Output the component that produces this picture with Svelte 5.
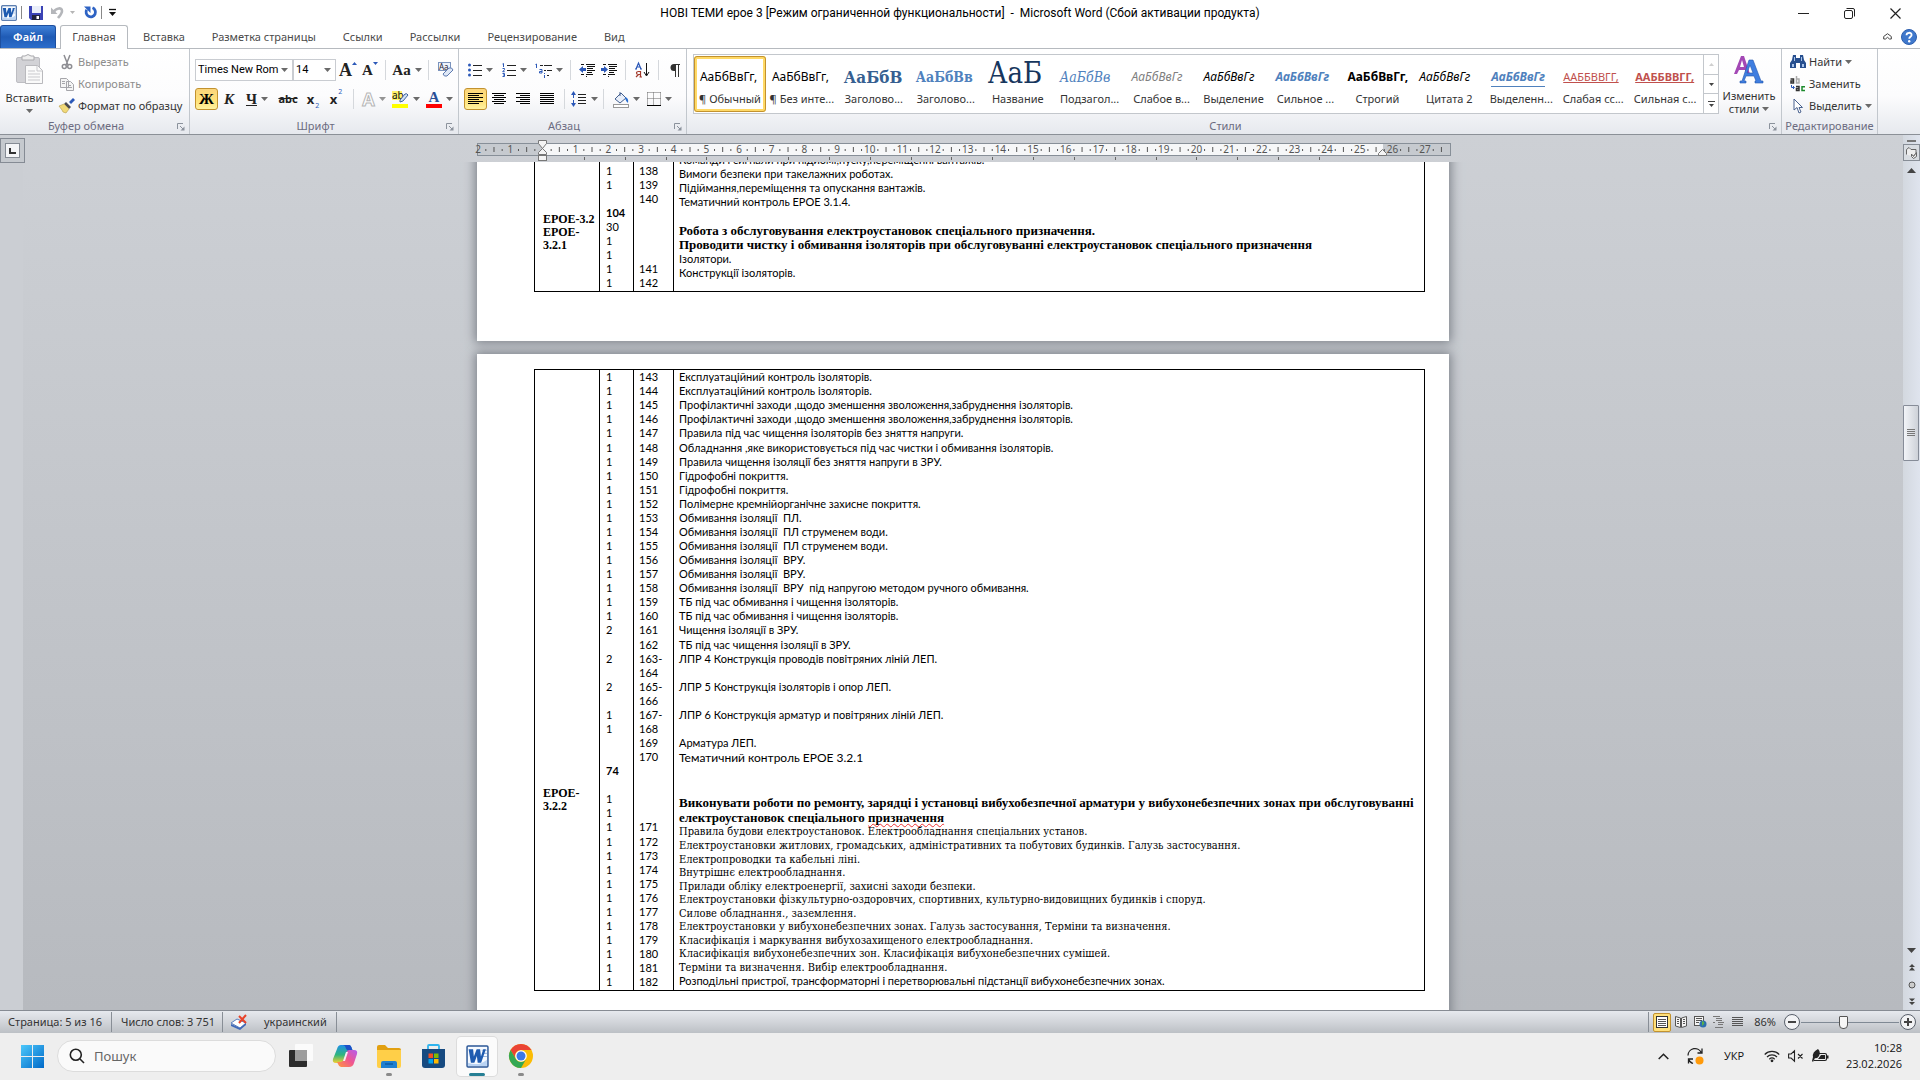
<script>
  const tabs = ['Вставка', 'Разметка страницы', 'Ссылки', 'Рассылки', 'Рецензирование', 'Вид'];

  const styles = [
    { name: '¶ Обычный', sample: 'АаБбВвГг,', cls: 'plain', active: true },
    { name: '¶ Без инте...', sample: 'АаБбВвГг,', cls: 'plain' },
    { name: 'Заголово...', sample: 'АаБбВ', cls: 'head1' },
    { name: 'Заголово...', sample: 'АаБбВв', cls: 'head2' },
    { name: 'Название', sample: 'АаБ', cls: 'title' },
    { name: 'Подзагол...', sample: 'АаБбВв', cls: 'subtitle' },
    { name: 'Слабое в...', sample: 'АаБбВвГг', cls: 'soft' },
    { name: 'Выделение', sample: 'АаБбВвГг', cls: 'emph' },
    { name: 'Сильное ...', sample: 'АаБбВвГг', cls: 'strongemph' },
    { name: 'Строгий', sample: 'АаБбВвГг,', cls: 'strict' },
    { name: 'Цитата 2', sample: 'АаБбВвГг', cls: 'emph' },
    { name: 'Выделенн...', sample: 'АаБбВвГг', cls: 'quote' },
    { name: 'Слабая сс...', sample: 'ААББВВГГ,', cls: 'softref' },
    { name: 'Сильная с...', sample: 'ААББВВГГ,', cls: 'strongref' }
  ];

  const blank = (n, cls = '') => Array.from({ length: n }, () => ['', cls]);
  const ones = (n) => Array.from({ length: n }, () => ['1']);
  const range = (a, b) => Array.from({ length: b - a + 1 }, (_, i) => [String(a + i)]);

  const page1 = [
    [...blank(4, 'tall'), ['ЕРОЕ-3.2', 'code'], ['ЕРОЕ-', 'code'], ['3.2.1', 'code']],
    [...blank(1), ...ones(2), ...blank(1), ['104', 'bold'], ['30'], ...ones(4)],
    [...blank(1), ...range(138, 140), ...blank(4), ...range(141, 142)],
    [
      ['Команди і сигнали при підйомі,пуску,переміщенні вантажів.'],
      ['Вимоги безпеки при такелажних роботах.'],
      ['Підіймання,переміщення та опускання вантажів.'],
      ['Тематичний контроль ЕРОЕ 3.1.4.'],
      ['', 'tall'],
      ['Робота з обслуговування електроустановок спеціального призначення.', 'heading'],
      ['Проводити чистку і обмивання ізоляторів при обслуговуванні електроустановок спеціального призначення', 'heading'],
      ['Ізолятори.'],
      ['Конструкції ізоляторів.']
    ]
  ];

  const page2 = [
    [...blank(27), ...blank(3, 'code'), ['ЕРОЕ-', 'code'], ['3.2.2', 'code']],
    [
      ...ones(5), ['1', 'tall'], ...ones(12), ['2'], ['', 'tall'], ['2'], [''], ['2'], [''],
      ['1'], ['1'], [''], [''], ['74', 'bold'], [''], ['1'], ['1'], ['1'], ['1', 'tall'], ...ones(10)
    ],
    [
      ...range(143, 147), ['148', 'tall'], ...range(149, 161), ['162', 'tall'],
      ['163-'], ['164'], ['165-'], ['166'], ['167-'], ['168'], ['169'], ['170'],
      ...blank(4), ['171'], ['172', 'tall'], ...range(173, 182)
    ],
    [
      ['Експлуатаційний контроль ізоляторів.'],
      ['Експлуатаційний контроль ізоляторів.'],
      ['Профілактичні заходи ,щодо зменшення зволоження,забруднення ізоляторів.'],
      ['Профілактичні заходи ,щодо зменшення зволоження,забруднення ізоляторів.'],
      ['Правила під час чищення ізоляторів без зняття напруги.'],
      ['Обладнання ,яке використовується під час чистки і обмивання ізоляторів.', 'tall'],
      ['Правила чищення ізоляції без зняття напруги в ЗРУ.'],
      ['Гідрофобні покриття.'],
      ['Гідрофобні покриття.'],
      ['Полімерне кремнійорганічне захисне покриття.'],
      ['Обмивання ізоляції  ПЛ.'],
      ['Обмивання ізоляції  ПЛ струменем води.'],
      ['Обмивання ізоляції  ПЛ струменем води.'],
      ['Обмивання ізоляції  ВРУ.'],
      ['Обмивання ізоляції  ВРУ.'],
      ['Обмивання ізоляції  ВРУ  під напругою методом ручного обмивання.'],
      ['ТБ під час обмивання і чищення ізоляторів.'],
      ['ТБ під час обмивання і чищення ізоляторів.'],
      ['Чищення ізоляції в ЗРУ.'],
      ['ТБ під час чищення ізоляції в ЗРУ.', 'tall'],
      ['ЛПР 4 Конструкція проводів повітряних ліній ЛЕП.'],
      [''],
      ['ЛПР 5 Конструкція ізоляторів і опор ЛЕП.'],
      [''],
      ['ЛПР 6 Конструкція арматур и повітряних ліній ЛЕП.'],
      [''],
      ['Арматура ЛЕП.'],
      ['Тематичний контроль ЕРОЕ 3.2.1', 'tall large'],
      ['', 'tall'],
      ['', 'tall'],
      ['Виконувати роботи по ремонту, зарядці і установці вибухобезпечної арматури у вибухонебезпечних зонах при обслуговуванні', 'heading tall'],
      ['електроустановок спеціального ', 'heading tall', 'призначення'],
      ['Правила будови електроустановок. Електрообладнання спеціальних установ.', 'serif'],
      ['Електроустановки житлових, громадських, адміністративних та побутових будинків. Галузь застосування.', 'serif'],
      ['Електропроводки та кабельні ліні.', 'serif short'],
      ['Внутрішнє електрообладнання.', 'serif'],
      ['Прилади обліку електроенергії, захисні заходи безпеки.', 'serif short'],
      ['Електроустановки фізкультурно-оздоровчих, спортивних, культурно-видовищних будинків і споруд.', 'serif'],
      ['Силове обладнання., заземлення.', 'serif short'],
      ['Електроустановки у вибухонебезпечних зонах. Галузь застосування, Терміни та визначення.', 'serif'],
      ['Класифікація і маркування вибухозахищеного електрообладнання.', 'serif short'],
      ['Класифікація вибухонебезпечних зон. Класифікація вибухонебезпечних сумішей.', 'serif'],
      ['Терміни та визначення. Вибір електрообладнання.', 'serif short'],
      ['Розподільні пристрої, трансформаторні і перетворювальні підстанції вибухонебезпечних зонах.', 'short']
    ]
  ];

  const unit = 32.67;
  const zero = 66;
  const marks = [];
  for (let q = -7; q <= 110; q++) {
    const n = q / 4;
    const x = zero + n * unit;
    if (q === 0) continue;
    if (q % 4 === 0) marks.push({ x, kind: 'num', label: String(Math.abs(n)) });
    else marks.push({ x, kind: q % 2 === 0 ? 'tick' : 'dot' });
  }
  const stops = Array.from({ length: 19 }, (_, i) => Math.round(zero + (i + 1) * unit * 1.25));

  let zoomLevel = $state(43);
</script>

{#snippet arrow()}
  <svg class="arrow" width="7" height="4" viewBox="0 0 7 4" aria-hidden="true"><path d="M0 0h7L3.5 4z" fill="#6a6a6a" /></svg>
{/snippet}

{#snippet launcher()}
  <button class="launcher" aria-label="Параметры">
    <svg width="8" height="8" viewBox="0 0 8 8"><path d="M.5 6V.5H6M3 3l3 3" fill="none" stroke="#8b929c" /><path d="M7.500 3.500v4h-4z" fill="#8b929c" /></svg>
  </button>
{/snippet}

{#snippet bars(lines)}
  <svg width="16" height="14" viewBox="0 0 16 14">
    {#each lines as l, i}
      <path d="M{l[0]} {i * 2 + 1.5}h{l[1]}" stroke="#000" />
    {/each}
  </svg>
{/snippet}

{#snippet sheet(cols)}
  <table>
    <tbody>
      <tr>
        {#each cols as lines, i}
          <td class="c{i}">
            {#each lines as [text, cls, flagged]}
              <div class="line {cls ?? ''}">{text}{#if flagged}<span class="typo">{flagged}</span>{/if}</div>
            {/each}
          </td>
        {/each}
      </tr>
    </tbody>
  </table>
{/snippet}

{#snippet wordLogo()}
  <svg viewBox="0 0 22 22" width="100%" height="100%">
    <rect x="1" y="1" width="20" height="20" rx="1" fill="#f6faff" stroke="#2b5797" stroke-width="1.400" />
    <path d="M15 5h5M16 8h4M15 11h5" stroke="#9db9e0" />
    <path d="M2 17c6 2 12 2 18-3v6H2z" fill="#b9d3f3" />
    <path d="M2.500 4h4.300l.7 7 2.700-7h3.300l.8 7 2.200-7H19l-4.500 13h-3.300l-.8-6.500L8 17H4.700z" fill="#1e5bb0" />
  </svg>
{/snippet}

<div class="app">
  <header class="titlebar">
    <div class="quick">
      <span class="applogo">{@render wordLogo()}</span>
      <i class="vline"></i>
      <button aria-label="Сохранить">
        <svg width="14" height="14" viewBox="0 0 14 14"><path d="M0 0h14v14H2l-2-2z" fill="#3a43b5" /><path d="M3 0h9v7H3z" fill="#e9eef9" /><path d="M3 9h8v5H3z" fill="#20233c" /><path d="M7.500 10H10v3H7.500z" fill="#fff" /></svg>
      </button>
      <button class="undo" aria-label="Отменить">
        <svg width="13" height="13" viewBox="0 0 13 13"><path d="M3 5.500c2-3.500 8-4.500 8-.5 0 2.500-1.500 4-4 7" fill="none" stroke="#b4b6ba" stroke-width="2.600" /><path d="M0 1.500V8h6.500z" fill="#b4b6ba" /></svg>
        <svg width="5" height="3" viewBox="0 0 5 3"><path d="M0 0h5L2.500 3z" fill="#b5b5b5" /></svg>
      </button>
      <button aria-label="Повторить">
        <svg width="13" height="13" viewBox="0 0 13 13"><path d="M8.500 1.800a4.700 4.700 0 1 1-5.800 2" fill="none" stroke="#2e63c4" stroke-width="2.800" /><path d="M0 .5h6.500V7z" fill="#2e63c4" /></svg>
      </button>
      <i class="vline"></i>
      <button aria-label="Настройка панели">
        <svg width="7" height="7" viewBox="0 0 7 7"><path d="M0 .5h7" stroke="#111" stroke-width="1.300" /><path d="M0 3h7L3.500 7z" fill="#111" /></svg>
      </button>
    </div>
    <h1>НОВІ ТЕМИ ерое 3 [Режим ограниченной функциональности]&nbsp; -&nbsp; Microsoft Word (Сбой активации продукта)</h1>
    <div class="winbtns">
      <button aria-label="Свернуть"><svg width="11" height="11" viewBox="0 0 11 11"><path d="M0 5.500h11" stroke="#222" /></svg></button>
      <button aria-label="Восстановить"><svg width="11" height="11" viewBox="0 0 11 11" fill="none" stroke="#222"><rect x=".5" y="2.500" width="8" height="8" rx="1.500" /><path d="M2.500 .5H9q1.500 0 1.500 1.500v6.500" /></svg></button>
      <button aria-label="Закрыть"><svg width="11" height="11" viewBox="0 0 11 11"><path d="M.5.500l10 10m0-10l-10 10" stroke="#222" stroke-width="1.200" /></svg></button>
    </div>
  </header>

  <nav class="tabs">
    <button class="file">Файл</button>
    <button class="tab current">Главная</button>
    {#each tabs as t}<button class="tab">{t}</button>{/each}
    <span class="grow"></span>
    <button class="mini" aria-label="Свернуть ленту"><svg width="9" height="7" viewBox="0 0 9 7"><path d="M.7 3.500L4.500.700l3.800 2.800v2.500H6.500L4.500 4.300 2.500 6H.7z" fill="#fff" stroke="#444" /></svg></button>
    <button class="mini" aria-label="Справка">
      <svg width="16" height="16" viewBox="0 0 16 16"><circle cx="8" cy="8" r="7.500" fill="#3f78cc" stroke="#2d5fae" /><path d="M5.500 6.200C5.500 3 10.600 3 10.600 6c0 1.700-2.400 1.900-2.400 3.800" fill="none" stroke="#fff" stroke-width="1.800" /><circle cx="8.200" cy="12.200" r="1.200" fill="#fff" /></svg>
    </button>
  </nav>

  <div class="ribbon">
    <section class="group clipboard">
      <div class="body">
        <button class="paste">
          <svg width="28" height="31" viewBox="0 0 28 31"><rect x=".5" y="3.500" width="23" height="25" rx="1.500" fill="#d2d2d6" stroke="#bdbdc2" /><path d="M6 2h3q3-3 6 0h3v4H6z" fill="#efefef" stroke="#a9a9ad" /><path d="M9.500 11.500h12l5 5v13h-17z" fill="#fafafa" stroke="#b9b9bd" /><path d="M21 12v5h5M12 17h7M12 20h12M12 23h12M12 26h12" fill="none" stroke="#c9c9cd" /></svg>
          <span>Вставить</span>
          {@render arrow()}
        </button>
        <div class="stack">
          <button class="off">
            <svg width="16" height="16" viewBox="0 0 16 16" fill="none" stroke="#8d8d92" stroke-width="1.500"><path d="M5 1l4 10M11 1L7 11" /><circle cx="5.300" cy="12.500" r="2" /><circle cx="10.700" cy="12.500" r="2" /></svg>Вырезать
          </button>
          <button class="off">
            <svg width="16" height="16" viewBox="0 0 16 16" fill="#f4f4f4" stroke="#a5a5aa"><path d="M1.500 2.500h6l2 2v7h-8zM7.500 5.500h4l3 3v6h-7z" /><path d="M3 5.500h3M3 7.500h3M9 9.500h3M9 11.500h4" /></svg>Копировать
          </button>
          <button>
            <svg width="16" height="16" viewBox="0 0 16 16"><path d="M10 4l4-4 2 2-4 4z" fill="#2b58b8" /><path d="M7 4l5 5-2 2-5-5z" fill="#4b4b50" /><path d="M0 8l5-2 5 5-3 4-3-1-1-2z" fill="#f1d978" stroke="#b59a45" stroke-width=".6" /></svg>Формат по образцу
          </button>
        </div>
      </div>
      <footer>Буфер обмена{@render launcher()}</footer>
    </section>

    <section class="group font">
      <div class="rows">
        <div class="row">
          <span class="combo face"><select aria-label="Шрифт"><option>Times New Rom</option></select>{@render arrow()}</span>
          <span class="combo size"><select aria-label="Размер шрифта"><option>14</option></select>{@render arrow()}</span>
          <button class="t w24" aria-label="Увеличить размер"><b class="serif18">A</b><svg class="top" width="5" height="3" viewBox="0 0 5 3"><path d="M0 3h5L2.500 0z" fill="#2b58b8" /></svg></button>
          <button class="t w20" aria-label="Уменьшить размер"><b class="serif14">A</b><svg class="top" width="5" height="3" viewBox="0 0 5 3"><path d="M0 0h5L2.500 3z" fill="#2b58b8" /></svg></button>
          <i class="sep"></i>
          <button class="t w32" aria-label="Регистр"><b class="serif14">Aa</b>{@render arrow()}</button>
          <i class="sep"></i>
          <button class="t w24" aria-label="Очистить формат">
            <svg width="16" height="16" viewBox="0 0 16 16"><rect x=".5" y=".5" width="12" height="8" fill="#eef3fb" stroke="#7b93bd" /><text x="1" y="7.500" font-size="8" font-family="Noto Sans" fill="#223">Aa</text><path d="M5 12l6-6q3-1 4 2l-6 6q-3 1-4-2z" fill="#dfe8f6" stroke="#5f7bb0" /></svg>
          </button>
        </div>
        <div class="row">
          <button class="t on"><b class="serif14">Ж</b></button>
          <button class="t w22"><b class="serif14"><em>К</em></b></button>
          <button class="t w34"><b class="serif14"><u>Ч</u></b>{@render arrow()}</button>
          <button class="t w28"><s>abc</s></button>
          <button class="t w22"><b class="sans13">x</b><sub>2</sub></button>
          <button class="t w24"><b class="sans13">x</b><sup>2</sup></button>
          <i class="sep"></i>
          <button class="t w30 dim"><b class="outline">A</b>{@render arrow()}</button>
          <button class="t w34" aria-label="Цвет выделения">
            <svg width="17" height="17" viewBox="0 0 17 17"><rect y="0" width="10" height="9" fill="#fff36b" /><text x="0" y="8" font-size="10" font-family="Noto Sans" fill="#111">ab</text><path d="M8 9l5-6q2-1 3 1l-5 6-3 1z" fill="#cfe0f5" stroke="#41639c" /><rect y="13" width="16" height="4" fill="#ff0" /></svg>{@render arrow()}
          </button>
          <button class="t w32" aria-label="Цвет текста">
            <svg width="16" height="17" viewBox="0 0 16 17"><text x="8" y="11" text-anchor="middle" font-size="15" font-weight="bold" font-family="Liberation Serif" fill="#2a4f96">A</text><rect y="13" width="16" height="4" fill="#f00" /></svg>{@render arrow()}
          </button>
        </div>
      </div>
      <footer>Шрифт{@render launcher()}</footer>
    </section>

    <section class="group para">
      <div class="rows">
        <div class="row">
          <button class="t w34" aria-label="Маркеры">
            <svg width="14" height="14" viewBox="0 0 14 14"><path d="M5 2.500h9M5 7.500h9M5 12.500h9" stroke="#222" /><g fill="#2b58b8"><circle cx="1.500" cy="2" r="1.500" /><circle cx="1.500" cy="7" r="1.500" /><circle cx="1.500" cy="12" r="1.500" /></g></svg>{@render arrow()}
          </button>
          <button class="t w34" aria-label="Нумерация">
            <svg width="14" height="14" viewBox="0 0 14 14"><path d="M5 2.500h9M5 7.500h9M5 12.500h9" stroke="#222" /><path d="M.500 1l1-.5V4M.500 5.500h2v1.200l-1.800 2h2M.500 10.500h2v3h-2M1 12h1.500" fill="none" stroke="#2b58b8" /></svg>{@render arrow()}
          </button>
          <button class="t w34" aria-label="Многоуровневый список">
            <svg width="17" height="15" viewBox="0 0 17 15"><path d="M5 2.500h3M9 2.500h8M9 7.500h2M12 7.500h5M12 12.500h2" stroke="#222" /><path d="M.500 1.500l1-.5V5M4.500 6.500h2.500v3.500H4.500V8.500H7M9.500 10v1M9.500 12v3" fill="none" stroke="#2b58b8" /></svg>{@render arrow()}
          </button>
          <i class="sep"></i>
          <button class="t w22" aria-label="Уменьшить отступ"><svg width="17" height="14" viewBox="0 0 17 14"><path d="M2 1.500h3M7 1.500h9M8 3.500h8M8 5.500h6M8 7.500h8M8 9.500h5M2 11.500h3M7 11.500h7M7 13.500h1" stroke="#111" /><path d="M0 6.500l4-3.500v2h3v3H4v2z" fill="#2b58b8" /></svg></button>
          <button class="t w22" aria-label="Увеличить отступ"><svg width="17" height="14" viewBox="0 0 17 14"><path d="M2 1.500h3M7 1.500h9M8 3.500h8M8 5.500h6M8 7.500h8M8 9.500h5M2 11.500h3M7 11.500h7M7 13.500h1" stroke="#111" /><path d="M7 6.500L3 3v2H0v3h3v2z" fill="#2b58b8" /></svg></button>
          <i class="sep"></i>
          <button class="t w22" aria-label="Сортировка"><svg width="14" height="16" viewBox="0 0 14 16"><path d="M1 7l2.500-6L6 7M2 5h3.200M0 7h2M5 7h2" fill="none" stroke="#2b58b8" stroke-width="1.200" /><path d="M5.500 15V9.500H3.500q-2 0-2 1.500t2 1.500h2M3.500 12.500L1 15M4.500 15H7" fill="none" stroke="#a33a2c" stroke-width="1.200" /><path d="M11.500 1v12M9 10l2.500 4 2.500-4" fill="none" stroke="#111" /></svg></button>
          <i class="sep"></i>
          <button class="t w22" aria-label="Непечатаемые знаки"><svg width="10" height="13" viewBox="0 0 10 13"><path d="M5.500 13V.5H10M8.500 1v12" fill="none" stroke="#333" /><path d="M6 0H4a3.500 3.500 0 0 0 0 7h2z" fill="#333" /></svg></button>
        </div>
        <div class="row">
          <button class="t on" aria-label="По левому краю">{@render bars([[0,15],[0,11],[0,15],[0,11],[0,15],[0,11]])}</button>
          <button class="t w24" aria-label="По центру">{@render bars([[1,14],[3,10],[1,14],[3,10],[1,14],[3,10]])}</button>
          <button class="t w24" aria-label="По правому краю">{@render bars([[1,14],[5,10],[1,14],[5,10],[1,14],[5,10]])}</button>
          <button class="t w24" aria-label="По ширине">{@render bars([[1,14],[1,14],[1,14],[1,14],[1,14],[1,14]])}</button>
          <i class="sep"></i>
          <button class="t w28" aria-label="Интервал"><svg width="16" height="16" viewBox="0 0 16 16"><path d="M7 3.500h8M7 6.500h8M7 9.500h8M7 12.500h8" stroke="#222" /><path d="M0 4l2.500-4L5 4zM0 12l2.500 4L5 12zM2 4h1v3H2zM2 9h1v3H2z" fill="#2b58b8" /></svg>{@render arrow()}</button>
          <i class="sep"></i>
          <button class="t w34" aria-label="Заливка"><svg width="16" height="17" viewBox="0 0 16 17"><path d="M2 8l6-6 5 5-6 5z" fill="#e9effa" stroke="#44608f" /><path d="M7 5V1" stroke="#44608f" /><path d="M12 6q4 1 3 6-2-1-3-5z" fill="#2b6fd0" /><rect x=".5" y="13.500" width="15" height="3" fill="#fff" stroke="#999" /></svg>{@render arrow()}</button>
          <button class="t w32" aria-label="Границы"><svg width="14" height="14" viewBox="0 0 14 14" fill="none" stroke="#666"><path d="M.5.500h13M.5 6.500h13M.5.500v13M6.500.500v13M13.500.500v13" stroke-dasharray="1 1" /><path d="M0 13.500h14" stroke="#000" /></svg>{@render arrow()}</button>
        </div>
      </div>
      <footer>Абзац{@render launcher()}</footer>
    </section>

    <section class="group styles">
      <div class="body">
        <div class="gallery">
          {#each styles as s}
            <button class="style" class:active={s.active}>
              <span class="sample {s.cls}"><span>{s.sample}</span></span>
              <span class="name">{s.name}</span>
            </button>
          {/each}
          <div class="gscroll">
            <button class="dim" aria-label="Вверх"><svg width="5" height="3" viewBox="0 0 5 3"><path d="M0 3h5L2.500 0z" fill="#bbb" /></svg></button>
            <button aria-label="Вниз"><svg width="5" height="3" viewBox="0 0 5 3"><path d="M0 0h5L2.500 3z" fill="#444" /></svg></button>
            <button aria-label="Дополнительно"><svg width="7" height="6" viewBox="0 0 7 6"><path d="M0 .5h7" stroke="#444" /><path d="M1 3h5L3.500 6z" fill="#444" /></svg></button>
          </div>
        </div>
        <button class="change">
          <svg width="30" height="28" viewBox="0 0 30 28"><path d="M0 18L7 0h3l6 18h-4l-1-4H5l-2 4zm6-7h4L8 4z" fill="#a348b5" /><path d="M6 27v-2h2L15 4h4l8 21h2v2h-8v-2h1l-2-5h-8l-2 5h2v2zm7-10h6l-3-8z" fill="#3f7ee0" stroke="#2458ae" stroke-width=".6" /></svg>
          <span>Изменить</span>
          <span>стили {@render arrow()}</span>
        </button>
      </div>
      <footer>Стили{@render launcher()}</footer>
    </section>

    <section class="group edit">
      <div class="stack">
        <button><svg width="16" height="14" viewBox="0 0 16 14"><path d="M3 0h3v3h4V0h3l1 5 2 3v5h-6V8H6v5H0V8l2-3z" fill="#274f8f" /><path d="M2 9h2v3H2zM12 9h2v3h-2zM4 2h1v4H4zM11 2h1v4h-1z" fill="#a9c3ea" /></svg>Найти {@render arrow()}</button>
        <button><svg width="16" height="16" viewBox="0 0 16 16"><g fill="none" stroke-width="1.500"><path d="M.5 3h3v4H1V5h2.500" stroke="#333" /><path d="M6.500 0v7H9V3H6.500" stroke="#aaa" /><path d="M6 10.500h3v4H6.500v-2H9" stroke="#333" /><path d="M15 10.700h-3v3.800h3" stroke="#1c8a2c" /></g><path d="M1.500 9v2.500H4M3 10l1.500 1.500L3 13" fill="none" stroke="#2b58b8" /></svg>Заменить</button>
        <button><svg width="16" height="16" viewBox="0 0 16 16"><path d="M4 1v11l3-2.500L9 15l2-1-2-4.500h3.500z" fill="#fff" stroke="#4a628f" /></svg>Выделить {@render arrow()}</button>
      </div>
      <footer>Редактирование</footer>
    </section>
  </div>

  <main class="workspace">
    <div class="left">
      <button class="tabstop" aria-label="Тип табуляции"><span><svg width="7" height="6" viewBox="0 0 7 6"><path d="M1 0v5h6" fill="none" stroke="#333" stroke-width="2" /></svg></span></button>
    </div>
    <div class="center">
      <div class="rulerbar">
        <svg class="ruler" width="974" height="27" viewBox="0 0 974 27">
          <rect x=".5" y="8.500" width="973" height="12" fill="#c6cacf" stroke="#878f98" />
          <rect x="66" y="9" width="840" height="11" fill="#f6f7f8" />
          {#each marks as m}
            {#if m.kind === 'num'}
              <text x={m.x} y="18" text-anchor="middle">{m.label}</text>
            {:else if m.kind === 'tick'}
              <path d="M{m.x} 12v5" stroke="#555" />
            {:else}
              <path d="M{m.x} 14v2" stroke="#555" />
            {/if}
          {/each}
          <text x="1" y="18" text-anchor="middle">2</text>
          {#each stops as s}<path d="M{s}.500 22v3" stroke="#666" />{/each}
          <path d="M61.500 5.500h8v3l-4 5 4 4v2h-8v-2l4-4-4-5z" fill="#f4f4f4" stroke="#777" />
          <rect x="61.500" y="20.500" width="8" height="5" fill="#f4f4f4" stroke="#777" />
          <path d="M901.500 20.500v-2l4-4 4 4v2z" fill="#f4f4f4" stroke="#777" />
        </svg>
      </div>
      <div class="view">
        <article class="page first">{@render sheet(page1)}</article>
        <article class="page">{@render sheet(page2)}</article>
      </div>
    </div>
    <div class="scroll">
      <i class="split"></i>
      <button class="rulerbtn" aria-label="Линейка"><svg width="12" height="12" viewBox="0 0 12 12" fill="#eee" stroke="#666"><path d="M.5 7.500v-5L3 .5l2 2h5v4l-3 3" /><path d="M5.500 7l2 2.500 3-4v4l-3 2-2-2z" /></svg></button>
      <button class="up" aria-label="Вверх"><svg width="9" height="5" viewBox="0 0 9 5"><path d="M0 5h9L4.500 0z" fill="#444" /></svg></button>
      <div class="track"><div class="thumb"><svg width="8" height="8" viewBox="0 0 8 8"><path d="M0 .5h8M0 2.500h8M0 4.500h8M0 6.500h8" stroke="#777" /></svg></div></div>
      <button class="up" aria-label="Вниз"><svg width="9" height="5" viewBox="0 0 9 5"><path d="M0 0h9L4.500 5z" fill="#444" /></svg></button>
      <button class="nav" aria-label="Предыдущая страница"><svg width="6" height="7" viewBox="0 0 6 7"><path d="M0 3h6L3 0zM0 6.500h6L3 3z" fill="#444" /></svg></button>
      <button class="nav" aria-label="Объект перехода"><svg width="8" height="8" viewBox="0 0 8 8"><circle cx="4" cy="4" r="3" fill="#ccc" stroke="#555" /></svg></button>
      <button class="nav" aria-label="Следующая страница"><svg width="6" height="7" viewBox="0 0 6 7"><path d="M0 .5h6L3 3.500zM0 4h6L3 7z" fill="#444" /></svg></button>
    </div>
  </main>

  <div class="status">
    <button class="seg s1">Страница: 5 из 16</button>
    <button class="seg s2">Число слов: 3 751</button>
    <button class="seg s3">
      <svg width="17" height="15" viewBox="0 0 17 15"><path d="M0 8l6-4 9 4-6 5z" fill="#fff" stroke="#5b7fc0" /><path d="M0 9l9 4 6-5v2l-6 5-9-4z" fill="#3f68b8" /><path d="M8 1l7 7M15 0L8 8" stroke="#e8432a" stroke-width="2" /></svg>
      украинский
    </button>
    <span class="grow"></span>
    <i class="vbar"></i>
    <div class="views">
      <button class="sel" aria-label="Разметка страницы"><svg width="12" height="12" viewBox="0 0 12 12"><rect x=".5" y=".5" width="11" height="11" fill="#fff" stroke="#333" /><path d="M2 3.500h8M2 5.500h8M2 7.500h8M2 9.500h8" stroke="#555" /></svg></button>
      <button aria-label="Режим чтения"><svg width="12" height="12" viewBox="0 0 12 12" fill="#f4f4f4" stroke="#555"><path d="M.5.500l5 1.500v9.500l-5-1.500zM11.500.500l-5 1.500v9.500l5-1.500z" /><path d="M2 3.500h2M2 5.500h2M2 7.500h2M8 3.500h2M8 5.500h2M8 7.500h2" /></svg></button>
      <button aria-label="Веб-документ"><svg width="13" height="12" viewBox="0 0 13 12"><rect x=".5" y=".5" width="9" height="9" fill="#f4f4f4" stroke="#555" /><path d="M2 2.500h6M2 4.500h6M2 6.500h3" stroke="#555" /><circle cx="9" cy="8" r="3.500" fill="#2d6fae" /><path d="M8 5q3 1 2 3l-2 2z" fill="#57b04a" /></svg></button>
      <button aria-label="Структура"><svg width="12" height="12" viewBox="0 0 12 12"><path d="M0 .5h7M3 2.500h6M3 4.500h6M0 6.500h2M5 6.500h6M5 8.500h5M2 11.500h8" stroke="#777" /></svg></button>
      <button aria-label="Черновик"><svg width="12" height="12" viewBox="0 0 12 12"><path d="M0 1.500h11M0 3.500h11M0 5.500h11M0 7.500h11M0 9.500h11" stroke="#555" /></svg></button>
    </div>
    <button class="pct">86%</button>
    <button class="round" aria-label="Уменьшить"><svg width="16" height="16" viewBox="0 0 16 16"><circle cx="8" cy="8" r="7.500" fill="#f2f3f5" stroke="#59606b" /><path d="M4 8h8" stroke="#444" stroke-width="2" /></svg></button>
    <input class="zoom" type="range" aria-label="Масштаб" min="0" max="100" bind:value={zoomLevel} />
    <button class="round" aria-label="Увеличить"><svg width="16" height="16" viewBox="0 0 16 16"><circle cx="8" cy="8" r="7.500" fill="#f2f3f5" stroke="#59606b" /><path d="M4 8h8M8 4v8" stroke="#444" stroke-width="2" /></svg></button>
  </div>

  <div class="taskbar">
    <button class="start" aria-label="Пуск"><svg width="23" height="23" viewBox="0 0 23 23"><defs><linearGradient id="win" x1="0" y1="0" x2="1" y2="1"><stop offset="0" stop-color="#4cc8fb" /><stop offset="1" stop-color="#0069c8" /></linearGradient></defs><path d="M0 0h11v11H0zM12 0h11v11H12zM0 12h11v11H0zM12 12h11v11H12z" fill="url(#win)" /></svg></button>
    <label class="search">
      <svg width="16" height="16" viewBox="0 0 16 16" fill="none" stroke="#222" stroke-width="1.600"><circle cx="6.800" cy="6.800" r="5.500" /><path d="M11 11l4 4" /></svg>
      <input type="text" placeholder="Пошук" aria-label="Пошук" />
    </label>
    <div class="apps">
      <button aria-label="Представление задач"><svg width="24" height="24" viewBox="0 0 24 24"><rect x="6" y="0" width="18" height="17" rx="1" fill="#fbfbfb" /><rect x="0" y="6" width="18" height="17" rx="1" fill="#2c2c2c" /><rect x="6" y="6" width="12" height="11" fill="#9d9d9d" /></svg></button>
      <button aria-label="Copilot">
        <svg width="24" height="24" viewBox="0 0 24 24"><defs><linearGradient id="cpa" x1="0" y1="0" x2="0" y2="1"><stop offset="0" stop-color="#1f8fe8" /><stop offset=".55" stop-color="#2fb57e" /><stop offset="1" stop-color="#f3cf2e" /></linearGradient><linearGradient id="cpb" x1="1" y1="0" x2="0" y2="1"><stop offset="0" stop-color="#b35df0" /><stop offset=".5" stop-color="#f0568f" /><stop offset="1" stop-color="#ff9a3c" /></linearGradient></defs><path d="M8 1h8q2 0 3 4l1 2h-4q-2 0-3 3l-2 6q-1 3-3 3H3q-4 0-3-4L4 5q1-4 4-4z" fill="url(#cpa)" /><path d="M10 1h6q2 0 3 4l1 2h-5q-2-1-3-5z" fill="#1c50c8" /><path d="M16 23H8q-2 0-3-3l-1-2h4q2 0 3-3l2-6q1-3 3-3h5q4 0 3 4l-3 9q-1 4-5 4z" fill="url(#cpb)" /><path d="M13 8h2l-3 9h-2z" fill="#f4eef4" /></svg>
      </button>
      <button class="running" aria-label="Проводник"><svg width="24" height="23" viewBox="0 0 24 23"><path d="M0 2q0-2 2-2h6l3 3h11q2 0 2 2v4H0z" fill="#e2a010" /><path d="M0 5h24v16q0 2-2 2H2q-2 0-2-2z" fill="#ffcf48" /><path d="M4 23v-5q0-2 2-2h12q2 0 2 2v5z" fill="#1f7fd0" /><path d="M8 19h8" stroke="#0c5aa4" stroke-width="1.500" /></svg></button>
      <button aria-label="Store"><svg width="23" height="24" viewBox="0 0 23 24"><path d="M6 6V2q0-1 1-1h9q1 0 1 1v4" fill="none" stroke="#2fb4ee" stroke-width="1.800" /><path d="M0 5h23v16q0 3-3 3H3q-3 0-3-3z" fill="#164a80" /><path d="M6.500 9.500h4.500V14H6.500z" fill="#f25022" /><path d="M12 9.500h4.500V14H12z" fill="#7fba00" /><path d="M6.500 15h4.500v4.500H6.500z" fill="#00a4ef" /><path d="M12 15h4.500v4.500H12z" fill="#ffb900" /></svg></button>
      <button class="running open" aria-label="Microsoft Word"><span class="biglogo">{@render wordLogo()}</span></button>
      <button class="running" aria-label="Chrome"><svg width="24" height="24" viewBox="0 0 24 24"><circle cx="12" cy="12" r="12" fill="#fbbc04" /><path d="M1.600 6A12 12 0 0 1 22.400 6H12a6 6 0 0 0-5.200 9z" fill="#ea4335" /><path d="M1.600 6A12 12 0 0 0 12 24l5.200-9A6 6 0 0 1 6.800 15z" fill="#34a853" /><circle cx="12" cy="12" r="5.800" fill="#fff" /><circle cx="12" cy="12" r="4.500" fill="#3b78e7" /></svg></button>
    </div>
    <span class="grow"></span>
    <div class="tray">
      <button class="w30" aria-label="Скрытые значки"><svg width="11" height="7" viewBox="0 0 11 7"><path d="M.7 6L5.500 1.200 10.300 6" fill="none" stroke="#222" stroke-width="1.500" /></svg></button>
      <button class="w34" aria-label="Обновление"><svg width="17" height="17" viewBox="0 0 17 17"><g fill="none" stroke="#222" stroke-width="1.300"><path d="M1 7.500A7 7 0 0 1 14.500 5M15 .5V5h-4.500M6 15.500a7 7 0 0 1-4.500-4.500M1.500 15.500V11H6" /></g><circle cx="12.500" cy="12.500" r="4" fill="#ff9a0a" /></svg></button>
      <button class="lang">УКР</button>
      <button class="net" aria-label="Сеть, звук, батарея">
        <svg width="16" height="12" viewBox="0 0 16 12" fill="none" stroke="#222" stroke-width="1.200"><path d="M.7 4.500a10.300 10.300 0 0 1 14.600 0M3 7a7 7 0 0 1 10 0M5.300 9.200a4 4 0 0 1 5.400 0" /><circle cx="8" cy="10.800" r=".8" fill="#222" /></svg>
        <svg width="16" height="12" viewBox="0 0 16 12" fill="none" stroke="#222" stroke-width="1.100"><path d="M.6 4h2.500L6.500.800v10.400L3.100 8H.6zM10 4l4.500 4.500m0-4.500L10 8.500" /></svg>
        <svg width="17" height="14" viewBox="0 0 17 14"><path d="M7 4.500h6q1.500 0 1.500 1.500v4q0 1.500-1.500 1.500H2" fill="none" stroke="#222" stroke-width="1.200" /><path d="M15 6.500h1.500v3H15zM6 10l3-4h4v4z" fill="#222" /><path d="M1 8q-1-5 5-8 3 3 1 7-2 3-4 2l-2 4-1-1z" fill="#222" /></svg>
      </button>
      <button class="clock"><span>10:28</span><span>23.02.2026</span></button>
    </div>
  </div>
</div>

<style>
  :global(body) { margin: 0; }
  .app { display: flex; flex-direction: column; height: 100vh; overflow: hidden; background: #fff; color: #333; font: 11px/14px "Noto Sans", sans-serif; }
  button { display: flex; align-items: center; justify-content: center; padding: 0; border: 0; background: none; color: inherit; font: inherit; white-space: nowrap; }
  svg { display: block; flex: none; overflow: visible; }
  .grow { flex: 1; }
  .arrow { width: 7px; height: 4px; }

  .titlebar { display: grid; grid-template-columns: 1fr auto 1fr; align-items: center; height: 25px; }
  .titlebar h1 { margin: 0; font: 12px/24px Roboto, sans-serif; color: #000; }
  .quick { display: flex; align-items: center; gap: 7px; padding-left: 1px; }
  .applogo { width: 16px; height: 16px; }
  .vline { width: 1px; height: 13px; margin: 0 -2px 0 -3px; background: #888; }
  .quick .vline + button { margin-left: 2px; }
  .undo { gap: 6px; margin: 0 2px 0 1px; }
  .winbtns { display: flex; justify-content: flex-end; padding-right: 2px; }
  .winbtns button { width: 46px; height: 25px; padding-top: 2px; }

  .tabs { display: flex; height: 23px; border-bottom: 1px solid #b6babf; align-items: stretch; }
  .file { width: 56px; border-radius: 3px 3px 0 0; border: 1px solid #1d4f9f; border-bottom: 0; background: linear-gradient(#4081d8, #1f5bb5 50%, #2c6dcb); color: #fff; font-weight: 600; }
  .tab { padding: 0 13px 0 14px; color: #4a4a4a; }
  .tab.current { width: 68px; margin: 0 1px -1px 4px; padding: 0 0 1px; border: 1px solid #b6babf; border-bottom: 0; border-radius: 3px 3px 0 0; background: #fff; }
  .mini { width: 22px; }

  .ribbon { display: flex; height: 85px; border-bottom: 2px solid #8b9097; background: linear-gradient(#fff, #fcfcfd 55%, #e6e9ee); margin-bottom: -1px; }
  .group { display: flex; flex-direction: column; box-sizing: border-box; border-right: 1px solid #c2c7cd; }
  .group footer { display: flex; align-items: center; justify-content: center; height: 17px; margin-top: auto; padding-right: 17px; position: relative; color: #6b6b80; }
  .launcher { position: absolute; right: 4px; top: 6px; }
  .body { display: flex; }
  .clipboard { width: 190px; }
  .font { width: 269px; }
  .para { width: 228px; }
  .styles { width: 1095px; flex: 0 1 auto; }
  .edit { width: 96px; }
  .group.edit footer { padding-right: 0; }
  .paste { flex-direction: column; width: 59px; padding-top: 5px; gap: 6px; justify-content: flex-start; }
  .paste span { margin-bottom: -2px; }
  .stack { display: flex; flex-direction: column; padding-top: 2px; }
  .stack button { justify-content: flex-start; height: 22px; gap: 3px; }
  .off { color: #8d8d8d; }
  .rows { display: flex; flex-direction: column; gap: 7px; padding: 10px 0 0 5px; }
  .row { display: flex; align-items: center; height: 22px; }
  .t { position: relative; height: 22px; gap: 4px; color: #222; }
  .on { width: 23px; box-sizing: border-box; border: 1px solid #c2922f; border-radius: 3px; background: linear-gradient(#fbd57c, #ffe27a 60%, #fff2a0); color: #000; }
  .w20 { width: 20px; } .w22 { width: 22px; } .w24 { width: 24px; } .w28 { width: 28px; } .w30 { width: 30px; } .w32 { width: 32px; } .w34 { width: 34px; }
  .sep { width: 1px; height: 20px; margin: 0 5px; background: #d5d8dc; }
  .combo { position: relative; display: flex; align-items: center; box-sizing: border-box; height: 22px; border: 1px solid #c9ccd1; background: #fff; }
  .combo select { appearance: none; width: 100%; height: 20px; border: 0; padding: 0 0 0 2px; background: none; font: 11px/14px Roboto, sans-serif; color: #000; }
  .combo .arrow { position: absolute; right: 4px; top: 8px; }
  .face { width: 98px; } .size { width: 43px; }
  .serif18 { font: bold 18px/20px "Liberation Serif", serif; }
  .serif14 { font: bold 15px/18px "Liberation Serif", serif; }
  .sans13 { font: bold 13px/16px "Noto Sans", sans-serif; }
  .t sub, .t sup { font-size: 7px; line-height: 8px; margin-left: -3px; color: #2b58b8; }
  .t sub { align-self: flex-end; } .t sup { align-self: flex-start; }
  .t s { font-weight: bold; }
  .top { align-self: flex-start; margin: 3px 0 0 -4px; }
  .dim { color: #bbb; opacity: .7; }
  .outline { font: bold 18px/20px "Noto Sans", sans-serif; color: #fff; -webkit-text-stroke: 1px #999; }

  .styles .body { padding: 5px 2px 0 6px; justify-content: space-between; }
  .gallery { display: flex; box-sizing: border-box; height: 60px; min-width: 0; border: 1px solid #c3c7cc; background: #fff; }
  .style { flex-direction: column; box-sizing: border-box; width: 72px; height: 56px; margin-top: 1px; padding-top: 5px; justify-content: flex-start; border: 3px solid transparent; border-radius: 3px; color: #333; }
  .style.active { border-color: #ffd966; outline: 1px solid #c2922f; outline-offset: -1px; }
  .sample { display: flex; flex: none; align-items: center; width: 60px; height: 26px; color: #000; font-size: 12px; line-height: 26px; }
  .name { line-height: 18px; }
  .head1 { font: bold 17px/26px "DejaVu Serif Condensed", serif; color: #365f91; }
  .head2 { font: bold 14px/26px "DejaVu Serif Condensed", serif; color: #4f81bd; }
  .title { font: 29px/22px "DejaVu Serif Condensed", serif; color: #17365d; }
  .title span { padding-bottom: 8px; }
  .subtitle { font: italic 14px/26px "DejaVu Serif Condensed", serif; color: #4f81bd; }
  .soft { font-style: italic; color: #808080; }
  .emph { font-style: italic; }
  .strongemph { font-style: italic; font-weight: bold; color: #4f81bd; }
  .strict { font-weight: bold; }
  .quote { font-style: italic; font-weight: bold; color: #4f81bd; }
  .quote span { line-height: 18px; border-bottom: 1px solid #4f81bd; }
  .softref, .strongref { font-size: 11px; color: #c0504d; text-decoration: underline; }
  .strongref { font-weight: bold; }
  .gscroll { display: flex; flex-direction: column; width: 14px; margin-left: 2px; border-left: 1px solid #c3c7cc; }
  .gscroll button { flex: 1; }
  .gscroll button + button { border-top: 1px solid #c3c7cc; }
  .change { flex-direction: column; justify-content: flex-start; width: 60px; padding-top: 2px; line-height: 13px; }
  .change svg { margin-bottom: 5px; }
  .change .arrow { display: inline-block; margin: 0 0 2px; }
  .edit .stack { padding-left: 8px; }

  .workspace { display: flex; flex: 1; min-height: 0; background: linear-gradient(#cdd0d5, #b7babf); }
  .left { width: 23px; background: #cbced3; }
  .tabstop { position: relative; z-index: 1; width: 25px; height: 25px; margin-top: 3px; box-sizing: border-box; border: 1px solid #858b94; background: #c5c9ce; }
  .tabstop span { display: flex; align-items: flex-end; justify-content: center; box-sizing: border-box; width: 15px; height: 15px; padding-bottom: 3px; border: 1px solid #858b94; background: #f4f5f7; }
  .center { display: flex; flex-direction: column; align-items: center; flex: 1; min-width: 0; }
  .rulerbar { height: 27px; padding-left: 2px; }
  .ruler text { font-size: 10px; fill: #555; }
  .view { display: flex; flex-direction: column; align-items: center; gap: 13px; width: 100%; flex: 1; min-height: 0; overflow: hidden; }
  .page { box-sizing: border-box; width: 972px; flex: none; padding: 15px 24px 49px 57px; background: #fff; box-shadow: 0 0 10px 2px #7d828a; }
  .page.first { margin-top: -13px; padding-top: 0; }
  table { width: 891px; table-layout: fixed; border-collapse: collapse; color: #000; font: 11px/14px Lato, "Noto Sans", sans-serif; }
  td { padding: 0 0 1px 6px; border: 1px solid #000; vertical-align: top; }
  .c0 { width: 56px; padding-left: 8px; }
  .c1 { width: 27px; }
  .c2 { width: 34px; padding-left: 5px; }
  .c3 { padding-left: 5px; }
  .first .c0, .first .c3 { padding-top: 3px; }
  .line { height: 14px; white-space: pre; }
  .tall { height: 15px; line-height: 15px; }
  .short { height: 13px; line-height: 13px; }
  .code { height: 13px; font: bold 12px/13px "Liberation Serif", serif; }
  .bold { font-weight: bold; }
  .large { font-size: 12px; }
  .heading { font-family: "Liberation Serif", serif; font-size: 13px; font-weight: bold; }
  .serif { font-family: "DejaVu Serif Condensed", serif; }
  .typo { text-decoration: underline wavy #e33 1px; text-underline-offset: 1px; text-decoration-skip-ink: none; }

  .scroll { display: flex; flex-direction: column; align-items: center; width: 17px; background: linear-gradient(90deg, #d3d8df, #dfe4ee); padding-top: 5px; box-sizing: border-box; }
  .split { width: 9px; height: 2px; background: #777; }
  .rulerbtn { box-sizing: border-box; width: 17px; height: 17px; margin-top: 2px; border: 1px solid #878d96; background: #d9dde2; }
  .up { height: 18px; }
  .track { flex: 1; width: 100%; display: flex; flex-direction: column; }
  .thumb { display: flex; align-items: center; justify-content: center; box-sizing: border-box; width: 16px; height: 56px; margin-top: 226px; border: 1px solid #868c98; border-radius: 1px; background: linear-gradient(90deg, #f2f4f8, #cdd1d8); }
  .nav { height: 17px; }

  .status { display: flex; align-items: center; height: 23px; box-sizing: border-box; border-top: 1px solid #868b93; background: linear-gradient(#e6e9ee, #d2d5da 50%, #bcc0c5); color: #333; }
  .seg { height: 20px; box-sizing: border-box; border-right: 1px solid #888e96; justify-content: flex-start; }
  .s1 { width: 112px; padding-left: 8px; }
  .s2 { width: 111px; padding-left: 9px; }
  .s3 { width: 114px; padding-left: 8px; gap: 16px; }
  .vbar { width: 1px; height: 20px; background: #888e96; margin-right: 4px; }
  .views { display: flex; gap: 1px; }
  .views button { width: 18px; height: 19px; box-sizing: border-box; }
  .views .sel { border: 1px solid #c2922f; border-radius: 2px; background: #ffe07a; }
  .pct { width: 36px; }
  .round { width: 18px; }
  .zoom { appearance: none; width: 98px; height: 16px; margin: 0; background: linear-gradient(#7f8994, #7f8994) center / 100% 1px no-repeat; }
  .zoom::-webkit-slider-thumb { appearance: none; width: 9px; height: 13px; border: 1px solid #555; border-radius: 1px 1px 4px 4px; background: #f6f6f6; }
  .status .round:last-child { margin-right: 3px; }

  .taskbar { display: flex; align-items: center; height: 46px; padding-bottom: 1px; background: #eee; color: #111; }
  .start { width: 23px; margin: 0 13px 0 21px; }
  .search { display: flex; align-items: center; gap: 9px; box-sizing: border-box; width: 219px; height: 32px; padding-left: 11px; border: 1px solid #dcdcdc; border-radius: 16px; background: #fafafa; }
  .search input { flex: 1; min-width: 0; border: 0; background: none; padding: 0; font: 13px/20px "Noto Sans", sans-serif; }
  .search input::placeholder { color: #666; opacity: 1; }
  .apps { display: flex; align-items: center; padding-left: 5px; gap: 4px; }
  .apps button { position: relative; width: 40px; height: 39px; }
  .open { border-radius: 4px; background: #fbfbfb; box-shadow: 0 0 0 1px #dcdcdc; }
  .running::after { content: ""; position: absolute; bottom: 0; left: 17px; width: 6px; height: 3px; border-radius: 2px; background: #8a8a8a; }
  .open::after { left: 12px; width: 16px; background: #267f94; }
  .biglogo { width: 23px; height: 23px; }
  .tray { display: flex; align-items: center; padding-right: 18px; }
  .lang { width: 44px; }
  .lang, .clock { font: 11px/16px "Open Sans", sans-serif; }
  .net { gap: 8px; padding: 0 8px; }
  .clock { flex-direction: column; align-items: flex-end; width: 65px; }
</style>
